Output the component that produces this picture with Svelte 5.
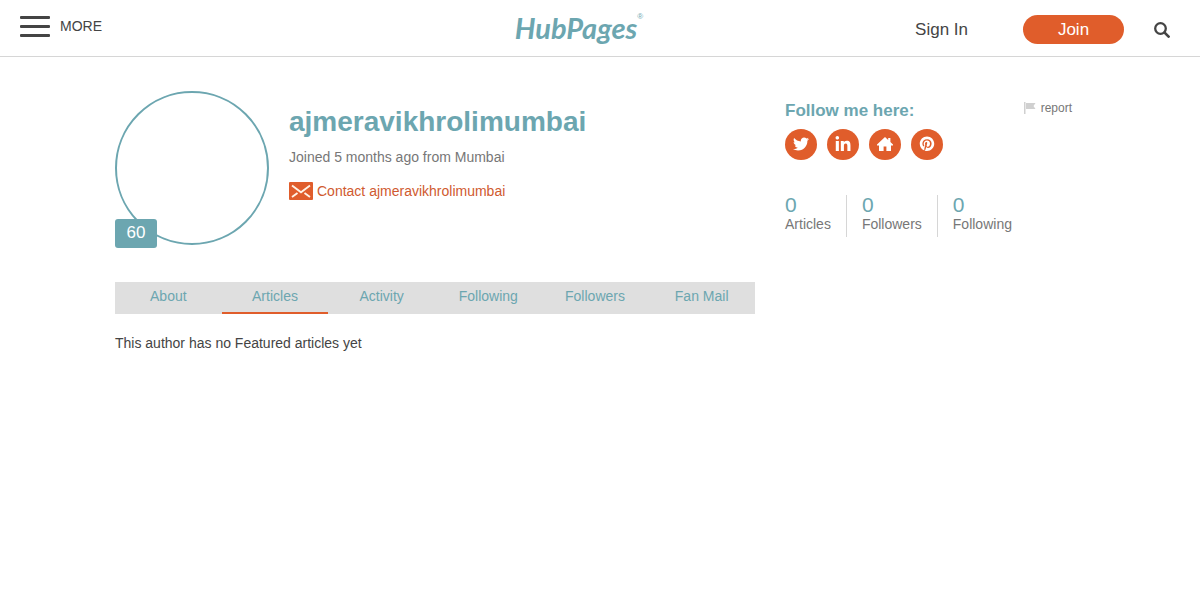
<script lang="ts">
  interface Social {
    name: string;
    viewBox: string;
    path: string;
  }

  let activeTab = $state("Articles");

  const tabs = ["About", "Articles", "Activity", "Following", "Followers", "Fan Mail"];

  const stats = [
    { label: "Articles", count: 0 },
    { label: "Followers", count: 0 },
    { label: "Following", count: 0 },
  ];

  const socials: Social[] = [
    {
      name: "Twitter",
      viewBox: "0 0 512 512",
      path: "M459.37 151.716c.325 4.548.325 9.097.325 13.645 0 138.72-105.583 298.558-298.558 298.558-59.452 0-114.68-17.219-161.137-47.106 8.447.974 16.568 1.299 25.34 1.299 49.055 0 94.213-16.568 130.274-44.832-46.132-.975-84.792-31.188-98.112-72.772 6.498.974 12.995 1.624 19.818 1.624 9.421 0 18.843-1.3 27.614-3.573-48.081-9.747-84.143-51.98-84.143-102.985v-1.299c13.969 7.797 30.214 12.67 47.431 13.319-28.264-18.843-46.781-51.005-46.781-87.391 0-19.492 5.197-37.36 14.294-52.954 51.655 63.675 129.3 105.258 216.365 109.807-1.624-7.797-2.599-15.918-2.599-24.04 0-57.828 46.782-104.934 104.934-104.934 30.213 0 57.502 12.67 76.67 33.137 23.715-4.548 46.456-13.32 66.599-25.34-7.798 24.366-24.366 44.833-46.132 57.827 21.117-2.273 41.584-8.122 60.426-16.243-14.292 20.791-32.161 39.308-52.628 54.253z",
    },
    {
      name: "LinkedIn",
      viewBox: "-16 0 480 480",
      path: "M100.28 448H7.4V148.9h92.88zM53.79 108.1C24.09 108.1 0 83.5 0 53.8a53.79 53.79 0 0 1 107.58 0c0 29.7-24.1 54.3-53.79 54.3zM447.9 448h-92.68V302.4c0-34.7-.7-79.2-48.29-79.2-48.29 0-55.69 37.7-55.69 76.7V448h-92.78V148.9h89.08v40.8h1.3c12.4-23.5 42.69-48.3 87.88-48.3 94 0 111.28 61.9 111.28 142.3V448z",
    },
    {
      name: "Website",
      viewBox: "0 0 16 16",
      path: "M8 1 0 8.6V9.4h2V15h4.6v-4.4h2.8V15H14V9.4h2v-.8l-2.6-2.5V2h-2.2v2z",
    },
    {
      name: "Pinterest",
      viewBox: "-26 -12 548 548",
      path: "M496 256c0 137-111 248-248 248-25.6 0-50.2-3.9-73.4-11.1 10.1-16.5 25.2-43.5 30.8-65 3-11.6 15.4-59 15.4-59 8.1 15.4 31.7 28.5 56.8 28.5 74.8 0 128.7-68.8 128.7-154.3 0-81.9-66.9-143.2-152.9-143.2-107 0-163.9 71.8-163.9 150.1 0 36.4 19.4 81.7 50.3 96.1 4.7 2.2 7.2 1.2 8.3-3.3.8-3.4 5-20.3 6.9-28.1.6-2.5.3-4.7-1.7-7.1-10.1-12.5-18.3-35.3-18.3-56.6 0-54.7 41.4-107.6 112-107.6 60.9 0 103.6 41.5 103.6 100.9 0 67.1-33.9 113.6-78 113.6-24.3 0-42.6-20.1-36.7-44.8 7-29.5 20.5-61.3 20.5-82.6 0-19-10.2-34.9-31.4-34.9-24.9 0-44.9 25.7-44.9 60.2 0 22 7.4 36.8 7.4 36.8s-24.5 103.8-29 123.2c-5 21.4-3 51.6-.9 71.2C65.4 450.9 0 361.1 0 256 0 119 111 8 248 8s248 111 248 248z",
    },
  ];
</script>

<header class="site-header">
  <button class="menu-btn" type="button">
    <span class="bars"><i></i><i></i><i></i></span>
    MORE
  </button>
  <a class="logo" href="/">HubPages<sup>®</sup></a>
  <div class="account">
    <a class="sign-in" href="/signin">Sign In</a>
    <a class="join" href="/join">Join</a>
    <button class="search-btn" type="button" aria-label="Search">
      <svg viewBox="0 0 16 16" width="16" height="16">
        <circle cx="6.5" cy="6.5" r="5.3" fill="none" stroke="currentColor" stroke-width="2.3" />
        <path d="m10.6 10.6 4 4" stroke="currentColor" stroke-width="2.7" stroke-linecap="round" />
      </svg>
    </button>
  </div>
</header>

<div class="page">
  <main>
    <section class="profile">
      <div class="avatar">
        <span class="score">60</span>
      </div>
      <div class="details">
        <h1>ajmeravikhrolimumbai</h1>
        <p class="joined">Joined 5 months ago from Mumbai</p>
        <a class="contact" href="/contact">
          <svg viewBox="0 0 24 18" width="24" height="18">
            <rect width="24" height="18" rx="1" fill="#e05d2b" />
            <path d="m3 3.5 9 6.7 9-6.7M3 15l5.5-4M21 15l-5.5-4" fill="none" stroke="#fff3e6" stroke-width="1.9" />
          </svg>
          Contact ajmeravikhrolimumbai
        </a>
      </div>
    </section>

    <nav class="tabs">
      {#each tabs as tab}
        <button type="button" class:active={activeTab === tab} onclick={() => (activeTab = tab)}>{tab}</button>
      {/each}
    </nav>

    <p class="empty">This author has no Featured articles yet</p>
  </main>

  <aside>
    <div class="follow">
      <div>
        <h2>Follow me here:</h2>
        <div class="socials">
          {#each socials as social}
            <a href="/{social.name.toLowerCase()}" aria-label={social.name}>
              <svg viewBox={social.viewBox} width="16" height="16" fill="currentColor"><path d={social.path} /></svg>
            </a>
          {/each}
        </div>
      </div>
      <a class="report" href="/report">
        <svg viewBox="0 0 12 12" width="12" height="12" fill="#d0d0d0">
          <path d="M0 0h1.5v12H0zM2 1h9.5l-2 3 2 3H2z" />
        </svg>
        report
      </a>
    </div>
    <ul class="stats">
      {#each stats as stat}
        <li><b>{stat.count}</b>{stat.label}</li>
      {/each}
    </ul>
  </aside>
</div>

<style>
  :global(body) {
    margin: 0;
    background: #fff;
    color: #444;
    font: 14px/18px "Liberation Sans", Arial, sans-serif;
  }

  a {
    color: inherit;
    text-decoration: none;
  }
  button {
    padding: 0;
    border: 0;
    background: none;
    color: inherit;
    font: inherit;
    cursor: pointer;
  }
  svg {
    display: block;
    flex: none;
  }
  h1,
  h2,
  p,
  ul {
    margin: 0;
    padding: 0;
  }

  .site-header {
    display: grid;
    grid-template-columns: 1fr auto 1fr;
    align-items: center;
    height: 56px;
    padding: 0 30px 0 20px;
    border-bottom: 1px solid #d6d6d6;
  }
  .menu-btn {
    display: flex;
    align-items: center;
    justify-self: start;
    gap: 10px;
    padding-bottom: 4px;
  }
  .bars {
    display: grid;
    gap: 6px;
  }
  .bars i {
    width: 30px;
    height: 3px;
    border-radius: 1px;
    background: #444;
  }
  .logo {
    display: flex;
    padding-right: 32px;
    color: #6ca6b0;
    font: italic 700 29px/48px Lato, sans-serif;
  }
  .logo sup {
    font: 8px/26px "Liberation Sans", Arial, sans-serif;
  }
  .account {
    display: flex;
    align-items: center;
    justify-content: flex-end;
    gap: 30px;
    padding-top: 3px;
    font-size: 17px;
    line-height: 20px;
  }
  .sign-in {
    margin-right: 25px;
  }
  .join {
    width: 101px;
    border-radius: 15px;
    background: #e05d2b;
    color: #fff;
    line-height: 29px;
    text-align: center;
  }

  .page {
    display: grid;
    grid-template-columns: minmax(0, 640px) minmax(0, 300px);
    gap: 30px;
    max-width: 970px;
    margin: 0 auto;
    padding-top: 34px;
  }
  .profile {
    display: flex;
    gap: 20px;
  }
  .avatar {
    position: relative;
    box-sizing: border-box;
    flex: none;
    width: 154px;
    height: 154px;
    border: 2px solid #6ca6b0;
    border-radius: 50%;
  }
  .score {
    position: absolute;
    bottom: -5px;
    left: -2px;
    width: 42px;
    padding-bottom: 2px;
    border-radius: 3px;
    background: #6ca6b0;
    color: #fff;
    font-size: 17px;
    line-height: 27px;
    text-align: center;
  }
  .details {
    padding-top: 14px;
  }
  h1 {
    color: #6ca6b0;
    font-size: 28px;
    line-height: 34px;
  }
  .joined {
    margin: 9px 0 16px;
    color: #777;
  }
  .contact {
    display: flex;
    gap: 4px;
    color: #d05a2f;
  }

  .tabs {
    display: grid;
    grid-template-columns: repeat(6, 1fr);
    margin: 37px 0 20px;
    background: #dfdfdf;
    color: #6ca6b0;
  }
  .tabs button {
    height: 32px;
    padding-bottom: 2px;
    border-bottom: 2px solid transparent;
  }
  .tabs .active {
    border-bottom-color: #e05d2b;
  }

  aside {
    padding-top: 8px;
    color: #777;
  }
  .follow {
    display: flex;
    align-items: flex-start;
    justify-content: space-between;
    padding-right: 13px;
  }
  h2 {
    color: #6ca6b0;
    font-size: 17px;
    line-height: 24px;
  }
  .socials {
    display: flex;
    gap: 10px;
    margin-top: 6px;
  }
  .socials a {
    display: grid;
    place-items: center;
    box-sizing: border-box;
    width: 32px;
    height: 31px;
    padding-bottom: 2px;
    border-radius: 50%;
    background: #e05d2b;
    color: #fff;
  }
  .report {
    display: flex;
    align-items: center;
    gap: 5px;
    font-size: 12px;
  }
  .stats {
    display: flex;
    margin-top: 35px;
    list-style: none;
  }
  .stats li {
    padding: 0 15px 4px;
    border-left: 1px solid #d6d6d6;
  }
  .stats li:first-child {
    padding-left: 0;
    border-left: 0;
  }
  .stats b {
    display: block;
    color: #6ca6b0;
    font-size: 21px;
    font-weight: 400;
    line-height: 20px;
  }
</style>
